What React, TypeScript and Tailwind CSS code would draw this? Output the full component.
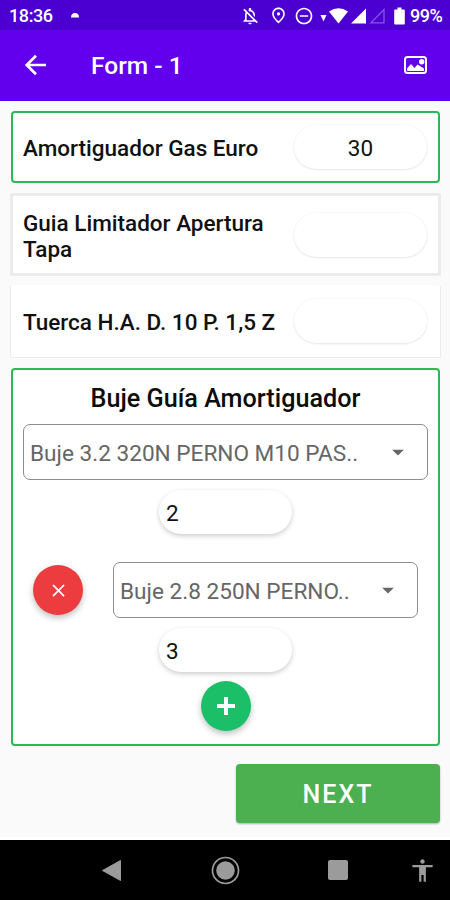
import { useState } from "react";
import {
  MdAccessibility,
  MdArrowDropDown,
  MdClose,
  MdOutlineNotificationsOff,
  MdOutlinePlace,
  MdRemoveCircleOutline,
} from "react-icons/md";

// --- Types ---
interface PillInputProps {
  value: string;
  onChange: (value: string) => void;
  className: string;
}

interface PartRowProps {
  label: string;
  value: string;
  onChange: (value: string) => void;
  className: string;
}

function StatusBar() {
  return (
    <div className="flex h-[30px] shrink-0 items-center bg-[#4b00d1] pt-px pl-[9px] text-white">
      <span className="w-[61px] text-[18px] leading-[30px] font-medium tracking-[-0.4px]">18:36</span>
      <svg width="10" height="8" viewBox="0 0 10 8" className="shrink-0">
        <path d="M1 5.500C1 2.500 2.500 1 5 1s4 1.500 4 4.500z" fill="#fff" />
      </svg>
      <MdOutlineNotificationsOff className="ml-[160px] h-[20px] w-[20px] shrink-0" />
      <MdOutlinePlace className="ml-[9px] h-[19px] w-[19px] shrink-0" />
      <MdRemoveCircleOutline className="ml-[6px] h-[20px] w-[20px] shrink-0" />
      {/* wifi + signal */}
      <svg width="66" height="20" viewBox="0 0 66 20" className="ml-[5px] shrink-0">
        <path d="M1.500 9h6l-3 6.500z" fill="#fff" />
        <path d="M10 5.500Q19.500 -1 29 5.500L19.500 17.500z" fill="#fff" />
        <path d="M47 2.500v15H32z" fill="#fff" />
        <path d="M65 3.500v13.300H52z" fill="none" stroke="#8a55e2" strokeWidth="1.300" />
      </svg>
      <svg width="11" height="18" viewBox="0 0 11 18" className="ml-[9px] shrink-0">
        <path d="M3.500 0.500h4v2H10a.8.8 0 0 1 .8.8v13.400a.8.8 0 0 1-.8.8H1a.8.8 0 0 1-.8-.8V3.300a.8.8 0 0 1 .8-.8h2.500z" fill="#fff" />
      </svg>
      <span className="ml-[5px] text-[18px] leading-[30px] font-medium tracking-[-0.5px]">99%</span>
    </div>
  );
}

function TopNav() {
  return (
    <header className="flex h-[70.5px] shrink-0 items-center bg-[#6200ee] pr-[22px] pl-[22px] text-white">
      <button aria-label="Back">
        <svg width="28" height="28" viewBox="0 0 28 28" fill="none" stroke="currentColor" strokeWidth="2.700">
          <path d="M24 14H5.500M14 4.700L4.700 14l9.300 9.300" />
        </svg>
      </button>
      <h1 className="ml-[41px] flex-1 pt-[3px] text-[24.5px] font-medium">Form - 1</h1>
      <button aria-label="Gallery">
        <svg width="25" height="20" viewBox="0 0 25 20">
          <rect x="2" y="2" width="21" height="16" rx="2.500" fill="none" stroke="#fff" strokeWidth="2" />
          <path d="M4 16v-2.500l4-4.500 3.500 4 3-3.500 6.500 4V16z" fill="#fff" />
          <circle cx="18.700" cy="6.800" r="2.700" fill="#fff" />
        </svg>
      </button>
    </header>
  );
}

function PillInput({ value, onChange, className }: PillInputProps) {
  return (
    <input
      value={value}
      onChange={(e) => onChange(e.target.value)}
      className={`h-[44px] w-[133px] shrink-0 rounded-full bg-white text-[22.5px] text-[#111] outline-none ${className}`}
    />
  );
}

function PartRow({ label, value, onChange, className }: PartRowProps) {
  return (
    <div className={`flex shrink-0 items-center justify-between bg-white ${className}`}>
      <span className="w-[258px] pt-[2px] text-[22.5px] leading-[26px] font-medium text-[#111]">{label}</span>
      <PillInput
        value={value}
        onChange={onChange}
        className="pt-[2px] text-center shadow-[0_0.5px_2px_rgba(0,0,0,0.15)]"
      />
    </div>
  );
}

function SelectBox({ text, className }: { text: string; className: string }) {
  return (
    <button
      className={`flex h-[56px] shrink-0 items-center justify-between rounded-[7px] border border-[#8c8c8c] bg-white pl-[6px] text-left text-[22.6px] text-[#666] ${className}`}
    >
      <span className="pt-[3px] whitespace-nowrap">{text}</span>
      <MdArrowDropDown className="h-[28px] w-[28px] shrink-0 text-[#666]" />
    </button>
  );
}

function NavBar() {
  return (
    <nav className="flex h-[60px] shrink-0 items-center bg-black pl-[101px] text-[#9b9b9b]">
      <svg width="21" height="23" viewBox="0 0 21 23" fill="currentColor">
        <path d="M19.500 1.500v20L1.500 11.500z" stroke="currentColor" strokeLinejoin="round" />
      </svg>
      <svg width="30" height="30" viewBox="0 0 30 30" className="ml-[88px]">
        <circle cx="15.500" cy="15.500" r="13" fill="none" stroke="currentColor" strokeWidth="1.700" />
        <circle cx="15.500" cy="15.500" r="9.300" fill="currentColor" />
      </svg>
      <div className="ml-[88px] h-[20px] w-[20px] rounded-[2px] bg-[#9b9b9b]" />
      <MdAccessibility className="ml-[61px] h-[27px] w-[27px]" />
    </nav>
  );
}

function App() {
  const [gas, setGas] = useState("30");
  const [guia, setGuia] = useState("");
  const [tuerca, setTuerca] = useState("");
  const [buje1, setBuje1] = useState("2");
  const [buje2, setBuje2] = useState("3");

  return (
    <div className="flex h-[900px] w-[450px] flex-col overflow-hidden bg-[#fafafa] font-[Roboto,sans-serif]">
      <StatusBar />
      <TopNav />

      <main className="flex flex-1 flex-col border-b-[3px] border-white pt-[10.5px] pr-[10px] pl-[11px]">
        <PartRow
          label="Amortiguador Gas Euro"
          value={gas}
          onChange={setGas}
          className="h-[72px] rounded-[4px] border-2 border-[#2db755] pr-[11px] pl-[10px]"
        />
        <PartRow
          label="Guia Limitador Apertura Tapa"
          value={guia}
          onChange={setGuia}
          className="mt-[10px] -mr-px -ml-px h-[83px] rounded-[2px] border-[3px] border-[#ebebeb] pr-[11px] pl-[10px]"
        />
        <PartRow
          label="Tuerca H.A. D. 10 P. 1,5 Z"
          value={tuerca}
          onChange={setTuerca}
          className="mt-[9px] -mr-px -ml-px h-[73px] rounded-[2px] border border-t-0 border-[#ececec] pr-[13px] pl-[12px]"
        />

        {/* Bushings */}
        <section className="mt-[10px] flex h-[378px] shrink-0 flex-col items-center rounded-[4px] border-2 border-[#2db755] bg-white pt-[12px]">
          <h2 className="text-[25.2px] leading-[34px] font-medium text-[#0c0c0c]">Buje Guía Amortiguador</h2>
          <SelectBox text="Buje 3.2 320N PERNO M10 PAS.." className="mt-[8px] w-[405px] pr-[15px]" />
          <PillInput
            value={buje1}
            onChange={setBuje1}
            className="mt-[10px] pt-px pl-[7px] shadow-[0_2px_5px_rgba(0,0,0,0.2)]"
          />
          <div className="mt-[28px] flex w-full shrink-0 items-center pl-[20px]">
            <button
              aria-label="Remove"
              className="flex h-[50px] w-[50px] items-center justify-center rounded-full bg-[#ec3c3f] text-white shadow-[0_3px_6px_rgba(0,0,0,0.25)]"
            >
              <MdClose className="h-[21px] w-[21px]" />
            </button>
            <SelectBox text="Buje 2.8 250N PERNO.." className="ml-[30px] w-[305px] pr-[15px]" />
          </div>
          <PillInput
            value={buje2}
            onChange={setBuje2}
            className="mt-[10px] pt-px pl-[7px] shadow-[0_2px_5px_rgba(0,0,0,0.2)]"
          />
          <button
            aria-label="Add"
            className="mt-[9px] flex h-[50px] w-[50px] shrink-0 items-center justify-center rounded-full bg-[#1bbf67] text-white shadow-[0_3px_6px_rgba(0,0,0,0.25)]"
          >
            <svg width="20" height="20" viewBox="0 0 20 20" stroke="currentColor" strokeWidth="4">
              <path d="M10 1v18M1 10h18" />
            </svg>
          </button>
        </section>

        <button className="mt-[18px] h-[59px] w-[204px] shrink-0 self-end rounded-[4px] bg-[#4caf50] pt-[2px] text-[25px] font-medium tracking-[2px] text-white shadow-[0_1px_2px_rgba(0,0,0,0.3)]">
          NEXT
        </button>
      </main>

      <NavBar />
    </div>
  );
}

export default App;
